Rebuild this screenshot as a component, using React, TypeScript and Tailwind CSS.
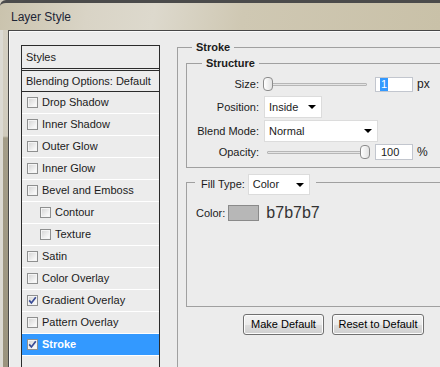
import clsx from "clsx";

type Effect = { label: string; indent?: boolean; checked?: boolean; selected?: boolean };

const effects: Effect[] = [
  { label: "Drop Shadow" },
  { label: "Inner Shadow" },
  { label: "Outer Glow" },
  { label: "Inner Glow" },
  { label: "Bevel and Emboss" },
  { label: "Contour", indent: true },
  { label: "Texture", indent: true },
  { label: "Satin" },
  { label: "Color Overlay" },
  { label: "Gradient Overlay", checked: true },
  { label: "Pattern Overlay" },
  { label: "Stroke", checked: true, selected: true },
];

function Checkbox({ checked }: { checked?: boolean }) {
  return (
    <span className="flex h-[11px] w-[11px] shrink-0 items-center justify-center border border-[#8e8f8f] bg-[linear-gradient(135deg,#d2d2d2,#f4f4f4_70%,#ffffff)] shadow-[inset_0_0_0_1px_#f4f4f4]">
      {checked && (
        <svg width="9" height="9" viewBox="0 0 9 9">
          <path d="M1.2 4.4 L3.4 7 L7.8 1.2" fill="none" stroke="#3a4c96" strokeWidth="1.7" />
        </svg>
      )}
    </span>
  );
}

function Arrow() {
  return (
    <svg width="8" height="4" viewBox="0 0 8 4" className="shrink-0">
      <polygon points="0,0 8,0 4,4" fill="#000" />
    </svg>
  );
}

function Dropdown({ value, width }: { value: string; width: string }) {
  return (
    <div className={clsx("flex h-[22px] items-center justify-between border border-[#dcdcdc] bg-white pl-[4px] pr-[5px] text-[11px]", width)}>
      <span>{value}</span>
      <Arrow />
    </div>
  );
}

function Slider({ atEnd }: { atEnd?: boolean }) {
  return (
    <div className="relative flex h-[16px] w-[106px] items-center">
      <div className="mx-[3px] h-[3px] flex-1 rounded-[1px] border border-[#b6b6b6] bg-[#e4e4e4]" />
      <div
        className={clsx(
          "absolute top-[1px] h-[14px] w-[10px] rounded-[4px] border border-[#8c8c8c] bg-[linear-gradient(90deg,#ffffff,#e2e2e2)]",
          atEnd ? "right-0" : "-left-[1px]"
        )}
      />
    </div>
  );
}

function Button({ children, width }: { children: string; width: string }) {
  return (
    <button className={clsx("h-[21px] rounded-[3px] border border-[#707070] bg-[linear-gradient(180deg,#f3f3f3_0%,#ebebeb_50%,#dddddd_51%,#cfcfcf_100%)] text-[11px] text-black shadow-[inset_0_0_0_1px_#fcfcfc]", width)}>
      {children}
    </button>
  );
}

export default function App() {
  return (
    <div className="flex h-[367px] w-[440px] flex-col overflow-hidden bg-[#d4cfc1] font-['Liberation_Sans',Arial,sans-serif] text-[#1b1b1b]">
      {/* title bar */}
      <div className="flex h-[30px] shrink-0 items-center rounded-tl-[6px] border-t-[3px] border-[#4b4b4b] bg-[linear-gradient(100deg,#cac3ad_0%,#d9d4c6_20%,#ddd9cd_35%,#cfc8b3_55%,#c9c1a8_100%)] pl-[11px]">
        <span className="text-[12px] text-[#1d2536]">Layer Style</span>
      </div>

      <div className="flex min-h-0 flex-1">
        {/* window frame left */}
        <div className="flex w-[8px] shrink-0">
          <div className="w-[3px] bg-[#dcdad3]" />
          <div className="w-[5px] bg-[linear-gradient(180deg,#d4cfc2_0px,#d0cbbd_106px,#a49d88_108px,#9b947e_100%)]" />
        </div>

        {/* client area */}
        <div className="flex flex-1 border-l border-t border-[#474747] bg-[#ececec] shadow-[inset_1px_1px_0_#fafafa]">
          {/* styles list */}
          <div className="ml-[12px] mt-[14px] h-[400px] w-[139px] shrink-0 border border-[#2b2b2b] bg-[#ececec] text-[11px]">
            <div className="flex h-[25px] items-center border-b-[3px] border-double border-[#2b2b2b] pl-[4px]">Styles</div>
            <div className="flex h-[21px] items-center border-b border-[#2b2b2b] pl-[4px]">Blending Options: Default</div>
            {effects.map((e) => (
              <div
                key={e.label}
                className={clsx(
                  "flex h-[22px] items-center gap-[4px] border-b border-white",
                  e.indent ? "pl-[18px]" : "pl-[5px]",
                  e.selected && "bg-[#3399ff] font-bold text-white"
                )}
              >
                <Checkbox checked={e.checked} />
                <span>{e.label}</span>
              </div>
            ))}
          </div>

          {/* stroke settings */}
          <fieldset className="ml-[17px] mt-[10px] w-[320px] shrink-0 border-l border-t border-[#a0a0a0] text-[11px]">
            <legend className="ml-[14px] px-[4px] text-[11px] font-bold leading-[13px]">Stroke</legend>

            <fieldset className="ml-[8px] mt-[3px] border border-[#a0a0a0] pb-[7px]">
              <legend className="ml-[15px] px-[4px] text-[11px] font-bold leading-[13px]">Structure</legend>

              <div className="mt-[6px] flex h-[16px] items-center">
                <span className="w-[72px] text-right">Size:</span>
                <div className="ml-[5px]"><Slider /></div>
                <div className="ml-[5px] flex h-[15px] w-[38px] items-center border border-[#c2c6ce] bg-white pl-[4px]">
                  <span className="bg-[#3399ff] px-[1px] leading-[13px] text-white">1</span>
                </div>
                <span className="ml-[4px] text-[12px]">px</span>
              </div>

              <div className="mt-[4px] flex h-[22px] items-center">
                <span className="w-[72px] text-right">Position:</span>
                <div className="ml-[5px]"><Dropdown value="Inside" width="w-[58px]" /></div>
              </div>

              <div className="mt-[2px] flex h-[22px] items-center">
                <span className="w-[72px] text-right">Blend Mode:</span>
                <div className="ml-[5px]"><Dropdown value="Normal" width="w-[114px]" /></div>
              </div>

              <div className="mt-[2px] flex h-[16px] items-center">
                <span className="w-[72px] text-right">Opacity:</span>
                <div className="ml-[5px]"><Slider atEnd /></div>
                <div className="ml-[5px] flex h-[16px] w-[38px] items-center border border-[#c2c6ce] bg-white pl-[5px]">100</div>
                <span className="ml-[4px] text-[12px]">%</span>
              </div>
            </fieldset>

            <fieldset className="ml-[8px] mt-[2px] border border-[#a0a0a0] pb-[85px]">
              <legend className="ml-[8px] flex items-center px-[6px] pt-[4px]">
                <span>Fill Type:</span>
                <div className="ml-[3px] flex h-[21px] w-[62px] items-center justify-between border border-[#dcdcdc] bg-white pl-[4px] pr-[5px]">
                  <span>Color</span>
                  <Arrow />
                </div>
              </legend>
              <div className="mt-[10px] flex h-[16px] items-center">
                <span className="ml-[9px]">Color:</span>
                <span className="ml-[3px] h-[16px] w-[31px] border border-[#8a8a8a] bg-[#b7b7b7]" />
                <span className="ml-[7px] text-[16px] leading-[16px] text-[#333]">b7b7b7</span>
              </div>
            </fieldset>

            <div className="mt-[7px] flex gap-[8px] pl-[65px]">
              <Button width="w-[81px]">Make Default</Button>
              <Button width="w-[92px]">Reset to Default</Button>
            </div>
          </fieldset>
        </div>
      </div>
    </div>
  );
}
